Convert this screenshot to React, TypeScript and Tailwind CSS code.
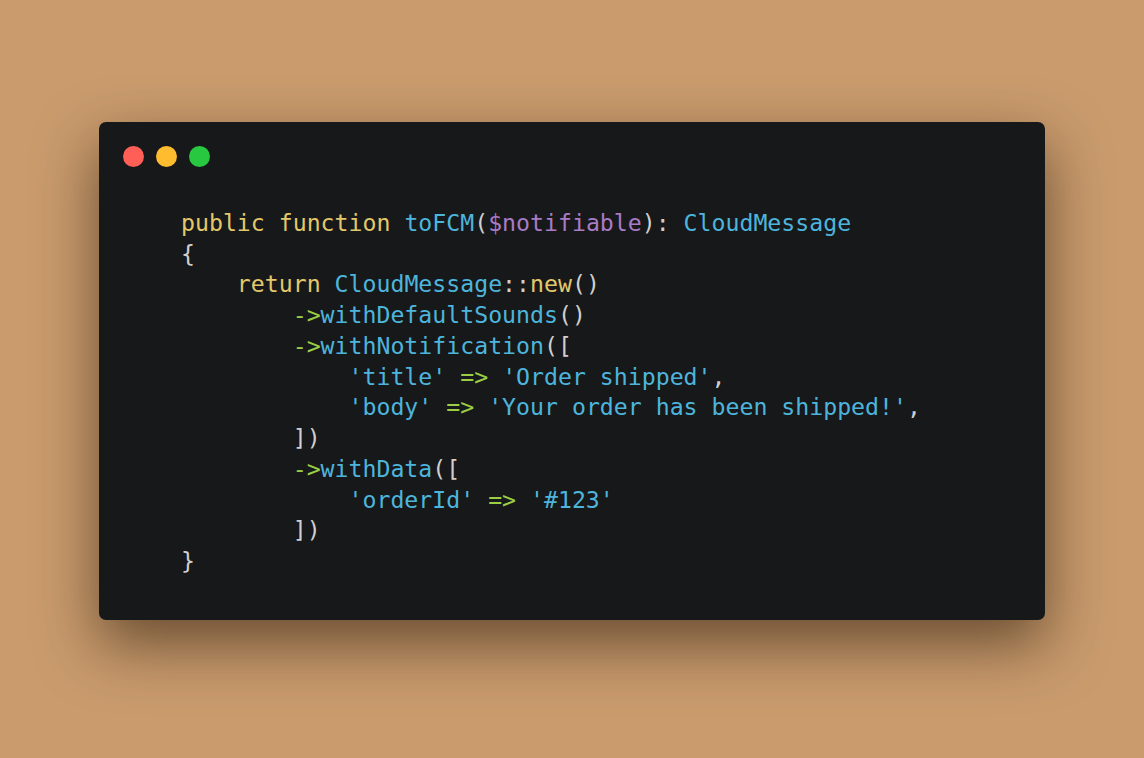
const Y = "text-[#e3c86b]";
const B = "text-[#4db5dc]";
const P = "text-[#a97bc6]";
const G = "text-[#9cce45]";
const W = "text-[#cfcfcf]";

type Tok = [string, string];

const lines: Tok[][] = [
  [[Y, "public function "], [B, "toFCM"], [W, "("], [P, "$notifiable"], [W, "): "], [B, "CloudMessage"]],
  [[W, "{"]],
  [[W, "    "], [Y, "return "], [B, "CloudMessage"], [W, "::"], [Y, "new"], [W, "()"]],
  [[W, "        "], [G, "->"], [B, "withDefaultSounds"], [W, "()"]],
  [[W, "        "], [G, "->"], [B, "withNotification"], [W, "(["]],
  [[W, "            "], [B, "'title'"], [W, " "], [G, "=>"], [W, " "], [B, "'Order shipped'"], [W, ","]],
  [[W, "            "], [B, "'body'"], [W, " "], [G, "=>"], [W, " "], [B, "'Your order has been shipped!'"], [W, ","]],
  [[W, "        ])"]],
  [[W, "        "], [G, "->"], [B, "withData"], [W, "(["]],
  [[W, "            "], [B, "'orderId'"], [W, " "], [G, "=>"], [W, " "], [B, "'#123'"]],
  [[W, "        ])"]],
  [[W, "}"]],
];

export default function App() {
  return (
    <div className="min-h-[758px] w-full bg-[#c99b6d] flex justify-center pt-[122px]">
      <div className="w-[946px] h-[498px] rounded-[7px] bg-[#17181a] shadow-[0_24px_60px_rgba(40,25,10,0.6)] flex flex-col">
        <div className="flex gap-3 pl-[24px] pt-[24px]">
          <span className="w-[21px] h-[21px] rounded-full bg-[#ff5f57]" />
          <span className="w-[21px] h-[21px] rounded-full bg-[#febc2e]" />
          <span className="w-[21px] h-[21px] rounded-full bg-[#28c840]" />
        </div>
        <pre
          className="mt-[41px] pl-[82px] text-[23.2px] leading-[30.73px] whitespace-pre"
          style={{ fontFamily: '"DejaVu Sans Mono", monospace' }}
        >
          {lines.map((ln, i) => (
            <div key={i}>
              {ln.map(([c, t], j) => (
                <span key={j} className={c}>
                  {t}
                </span>
              ))}
            </div>
          ))}
        </pre>
      </div>
    </div>
  );
}
